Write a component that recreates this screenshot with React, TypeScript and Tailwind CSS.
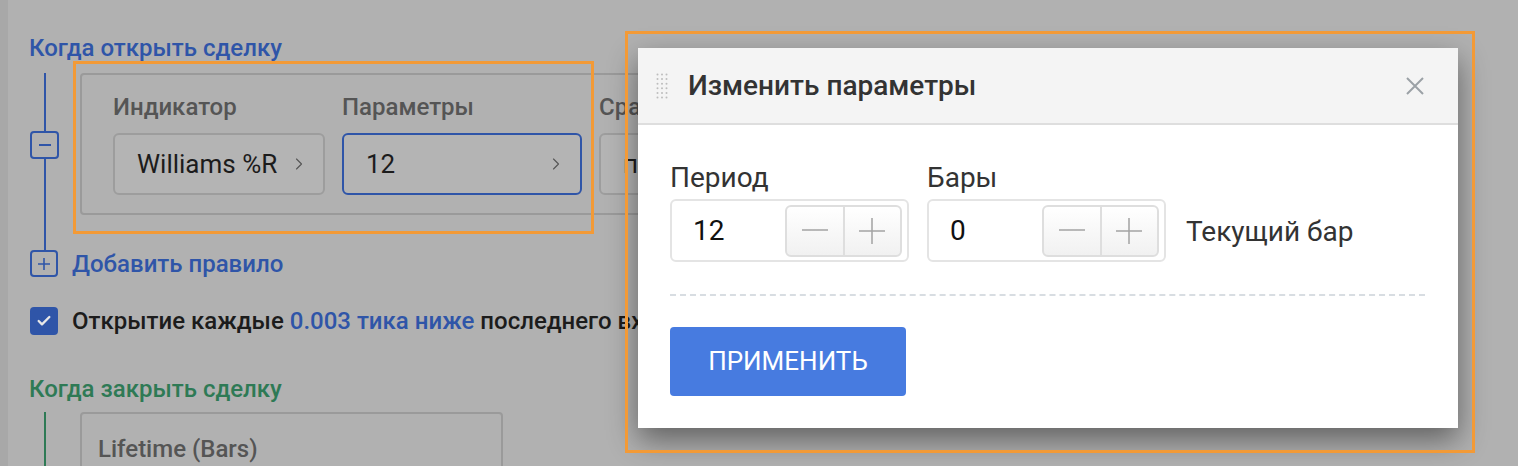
import { Check, ChevronRight } from 'lucide-react'

export default function App() {
  return (
    <div className="relative flex h-[466px] w-[1518px] overflow-hidden bg-[#b1b1b1] font-['Roboto',sans-serif]">
      <div className="w-2 shrink-0 bg-[#a8a8a8]" />
      <div className="flex flex-col pl-[21px] pt-[34px]">
        <div className="whitespace-nowrap text-[24px] font-medium leading-[28px] text-[#2f55a8]">Когда открыть сделку</div>

        {/* entry rule */}
        <div className="mt-[11px] flex shrink-0">
          <div className="ml-px flex w-[29px] flex-col items-center">
            <div className="h-[58px] w-[2px] bg-[#2f55a8]" />
            <div className="flex h-[28px] w-[29px] items-center justify-center rounded-[4px] border-2 border-[#2f55a8]">
              <div className="h-[2px] w-[12px] bg-[#2f55a8]" />
            </div>
            <div className="w-[2px] flex-1 bg-[#2f55a8]" />
          </div>
          <div className="pb-[35px] pl-[21px]">
            <div className="flex h-[142px] w-[700px] gap-[17px] rounded-[4px] border-2 border-[#9a9a9a] pl-[31px] pt-[18px]">
              <Field label="Индикатор" width="w-[212px]" value="Williams %R" />
              <Field label="Параметры" width="w-[240px]" value="12" active />
              <Field label="Сравнение" width="w-[240px]" value="пересекает" />
            </div>
          </div>
        </div>

        <div className="ml-px flex h-[27px] shrink-0 items-center">
          <div className="flex h-[27px] w-[28px] items-center justify-center rounded-[4px] border-2 border-[#2f55a8]">
            <svg width="14" height="14" viewBox="0 0 14 14">
              <path d="M7 1v12M1 7h12" stroke="#2f55a8" strokeWidth="1.6" />
            </svg>
          </div>
          <span className="ml-[14px] whitespace-nowrap text-[24px] font-medium text-[#2f55a8]">Добавить правило</span>
        </div>

        <div className="ml-px mt-[30px] flex h-[28px] shrink-0 items-center">
          <div className="flex h-[28px] w-[28px] shrink-0 items-center justify-center rounded-[4px] bg-[#2f55a8]">
            <Check className="h-[16px] w-[16px] text-[#e8e8e8]" strokeWidth={3.5} />
          </div>
          <span className="ml-[14px] whitespace-nowrap text-[24px] font-medium text-[#1c1c1c]">
            Открытие каждые <span className="text-[#2f55a8]">0.003 тика ниже</span> последнего входа
          </span>
        </div>

        <div className="mt-[40px] shrink-0 whitespace-nowrap text-[24px] font-medium leading-[28px] text-[#2e7a55]">Когда закрыть сделку</div>

        <div className="mt-[9px] flex shrink-0">
          <div className="ml-[15px] h-[60px] w-[2px] bg-[#2e7a55]" />
          <div className="ml-[34px] h-[80px] w-[423px] rounded-[4px] border-2 border-[#9a9a9a] pl-[16px] pt-[21px]">
            <div className="text-[24px] font-medium leading-[28px] text-[#555]">Lifetime (Bars)</div>
          </div>
        </div>
      </div>

      {/* modal */}
      <div className="absolute left-[638px] top-[48px] flex h-[380px] w-[820px] flex-col bg-white shadow-[0_12px_28px_rgba(0,0,0,0.45)]">
        <div className="flex h-[77px] items-center border-b-2 border-[#dedede] bg-[#f4f4f4] pl-[18px] pr-[33px]">
          <svg width="12" height="26" viewBox="0 0 12 26">
            {[0, 1, 2].map((c) =>
              [0, 1, 2, 3, 4, 5].map((r) => (
                <circle key={`${c}-${r}`} cx={1.5 + c * 4.5} cy={1.5 + r * 4.6} r="1" fill="#bdbdbd" />
              ))
            )}
          </svg>
          <span className="ml-[20px] flex-1 text-[28px] font-medium text-[#333]">Изменить параметры</span>
          <svg width="20" height="20" viewBox="0 0 20 20">
            <path d="M2 2l16 16M18 2L2 18" stroke="#9ba1a6" strokeWidth="2" />
          </svg>
        </div>

        <div className="flex flex-1 flex-col px-[32px] pt-[37px]">
          <div className="flex items-end gap-[18px]">
            <Stepper label="Период" value="12" />
            <Stepper label="Бары" value="0" />
            <span className="mb-[14px] ml-[2px] text-[28px] leading-[33px] text-[#333]">Текущий бар</span>
          </div>
          <div className="mr-[1px] mt-[32px] border-t-2 border-dashed border-[#d8dde2]" />
          <button className="mt-[31px] h-[69px] w-[236px] rounded-[4px] bg-[#477be0] text-[26px] text-white">
            ПРИМЕНИТЬ
          </button>
        </div>
      </div>

      {/* highlight frames */}
      <div className="pointer-events-none absolute left-[73px] top-[61px] h-[173px] w-[521px] border-[3px] border-[#f39a36]" />
      <div className="pointer-events-none absolute left-[625px] top-[31px] h-[422px] w-[850px] border-[3px] border-[#f39a36]" />
    </div>
  )
}

function Field({ label, width, value, active = false }: { label: string; width: string; value: string; active?: boolean }) {
  return (
    <div className="flex flex-col">
      <div className="h-[28px] whitespace-nowrap text-[24px] font-medium leading-[28px] text-[#555]">{label}</div>
      <div
        className={`mt-[12px] flex h-[62px] ${width} items-center justify-between rounded-[6px] border-2 bg-[#b4b4b4] pl-[22px] pr-[14px] ${
          active ? 'border-[#2f55a8]' : 'border-[#9d9d9d]'
        }`}
      >
        <span className="whitespace-nowrap text-[26px] text-[#1c1c1c]">{value}</span>
        <ChevronRight className="h-[20px] w-[20px] shrink-0 text-[#555]" strokeWidth={1.3} />
      </div>
    </div>
  )
}

function Stepper({ label, value }: { label: string; value: string }) {
  return (
    <div className="flex flex-col">
      <div className="text-[28px] leading-[32px] text-[#333]">{label}</div>
      <div className="mt-[5px] flex h-[63px] w-[239px] items-center justify-between rounded-[6px] border-2 border-[#e4e4e4] pl-[21px] pr-[5px]">
        <span className="text-[28px] text-[#111]">{value}</span>
        <div className="flex h-[52px] w-[117px] rounded-[6px] border-2 border-[#dedede] bg-gradient-to-b from-white to-[#f1f1f1]">
          <div className="flex flex-1 items-center justify-center border-r-2 border-[#dedede]">
            <svg width="26" height="26" viewBox="0 0 26 26">
              <path d="M0 12h26" stroke="#a3a3a3" strokeWidth="1.5" />
            </svg>
          </div>
          <div className="flex flex-1 items-center justify-center">
            <svg width="26" height="26" viewBox="0 0 26 26">
              <path d="M0 13h26M13 0v26" stroke="#a3a3a3" strokeWidth="1.5" />
            </svg>
          </div>
        </div>
      </div>
    </div>
  )
}
